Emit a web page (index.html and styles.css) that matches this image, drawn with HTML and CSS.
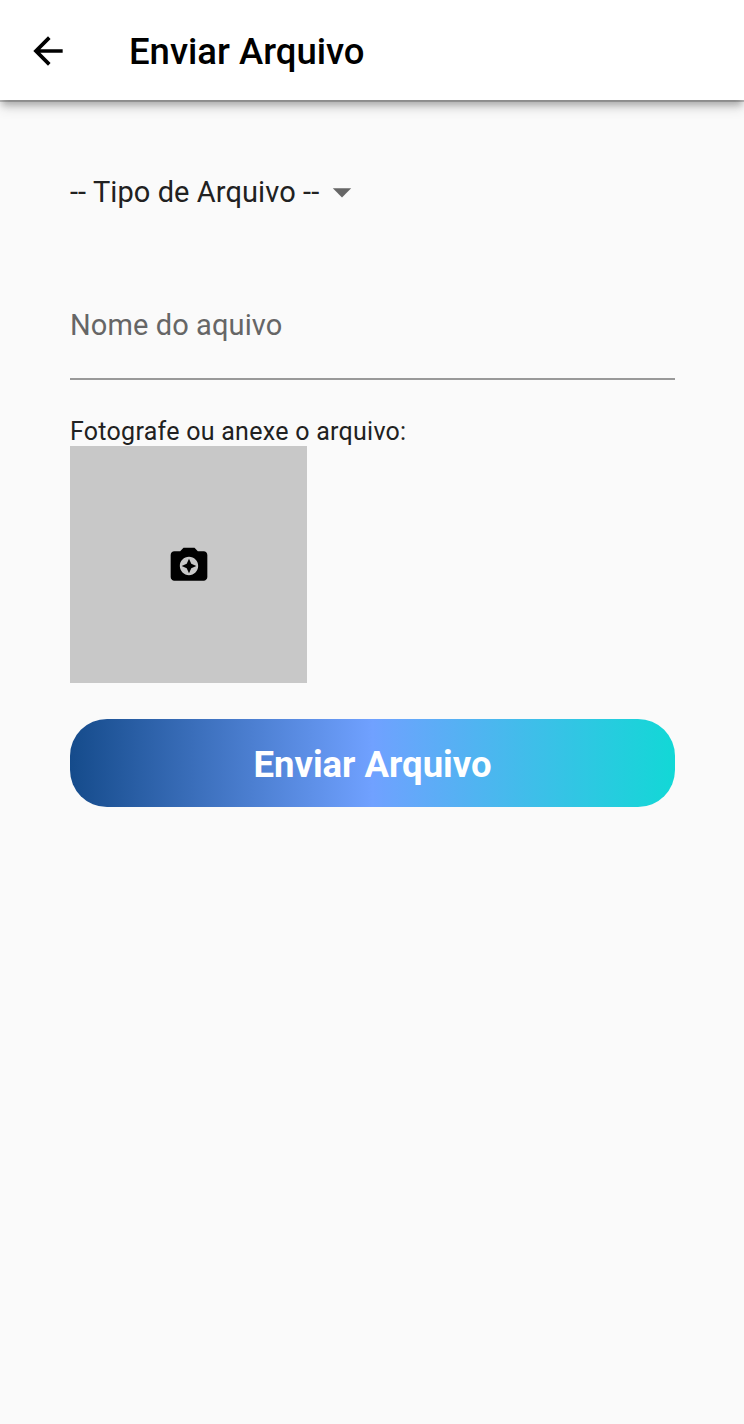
FILE: index.html
```
<!DOCTYPE html>
<html lang="pt-BR">
<head>
<meta charset="utf-8">
<title>Enviar Arquivo</title>
<link rel="stylesheet" href="styles.css">
</head>
<body>
<header class="app-bar">
  <svg class="back" viewBox="0 0 24 24"><path d="M20 11H7.83l5.59-5.59L12 4l-8 8 8 8 1.41-1.41L7.83 13H20v-2z"/></svg>
  <h1 class="title">Enviar Arquivo</h1>
</header>
<main class="form">
  <div class="select"><span class="select-text">-- Tipo de Arquivo --</span><svg class="caret" viewBox="0 0 24 24"><path d="M7 10l5 5 5-5z"/></svg></div>
  <div class="field"><span class="field-text">Nome do aquivo</span></div>
  <p class="caption"><span class="caption-text">Fotografe ou anexe o arquivo:</span></p>
  <div class="photo"><svg class="camera" viewBox="0 0 24 24"><path d="M9 2 7.17 4H4c-1.100 0-2 .9-2 2v12c0 1.100.9 2 2 2h16c1.100 0 2-.9 2-2V6c0-1.100-.9-2-2-2h-3.170L15 2H9zm3 15c-2.760 0-5-2.240-5-5s2.240-5 5-5 5 2.240 5 5-2.240 5-5 5z"/><path d="M12 16l1.250-2.750L16 12l-2.750-1.250L12 8l-1.250 2.750L8 12l2.750 1.250z"/></svg></div>
  <button class="submit">Enviar Arquivo</button>
</main>
</body>
</html>
```
FILE: styles.css
```
* { box-sizing: border-box; }
body { margin: 0; min-height: 1424px; background: #fafafa; font-family: Roboto, sans-serif; color: #212121; }
.app-bar { height: 100px; display: flex; align-items: center; padding-left: 26px; background: #fff; box-shadow: 0 2px 0 rgba(0,0,0,.2), 0 7px 7px -2px rgba(0,0,0,.24), 0 8px 12px rgba(0,0,0,.12); }
.back { width: 44px; height: 44px; margin-top: 1px; flex: none; }
.title { margin: 3px 0 0 59px; font-size: 36.500px; font-weight: 500; line-height: 44px; color: #000; white-space: nowrap; }
.form { padding: 69px 69px 0 70px; }
.select { display: flex; align-items: center; height: 46px; font-size: 29px; letter-spacing: .08px; white-space: nowrap; }
.caret { width: 44px; height: 44px; margin-left: 1px; fill: #666; }
.field { height: 165px; margin-bottom: 35px; padding-top: 93px; border-bottom: 2px solid #999; font-size: 29px; line-height: 34px; color: #666; letter-spacing: .1px; }
.caption { margin: 0; height: 31px; font-size: 25px; line-height: 34px; letter-spacing: .27px; white-space: nowrap; }
.photo { display: flex; align-items: center; justify-content: center; width: 237px; height: 237px; padding-top: 2px; background: #c8c8c8; }
.camera { width: 44px; height: 44px; }
.submit { display: block; width: 100%; height: 88px; margin-top: 36px; padding: 3px 0 0; border: 0; border-radius: 37px; background: linear-gradient(90deg, #154b8b, #70a1ff 50%, #12d8d6); color: #fff; font: 700 36.500px Roboto, sans-serif; }
```
